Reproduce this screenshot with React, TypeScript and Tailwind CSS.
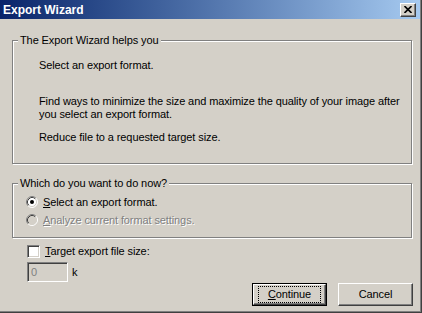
import React from "react";

const font = "font-['Liberation_Sans',Arial,sans-serif]";

function Radio({ checked, disabled }: { checked?: boolean; disabled?: boolean }) {
  return (
    <svg width="12" height="12" viewBox="0 0 12 12" className="shrink-0">
      <circle cx="6" cy="6" r="5" fill={disabled ? "#d4d0c8" : "#ffffff"} />
      <path d="M2.11 9.89 A5.5 5.5 0 0 1 9.89 2.11" fill="none" stroke="#808080" strokeWidth="1" />
      <path d="M9.89 2.11 A5.5 5.5 0 0 1 2.11 9.89" fill="none" stroke="#ffffff" strokeWidth="1" />
      <path d="M2.82 9.18 A4.5 4.5 0 0 1 9.18 2.82" fill="none" stroke="#404040" strokeWidth="1" />
      <path d="M9.18 2.82 A4.5 4.5 0 0 1 2.82 9.18" fill="none" stroke="#d4d0c8" strokeWidth="1" />
      {checked && <circle cx="6" cy="6" r="2" fill="#000000" />}
    </svg>
  );
}

export default function App() {
  return (
    <div
      className={`flex h-[313px] w-[422px] flex-col bg-[#d4d0c8] pr-[2px] pb-[2px] text-[11px] leading-[13px] tracking-[-0.1px] text-black shadow-[inset_-1px_-1px_0_#404040,inset_-2px_-2px_0_#808080] ${font}`}
    >
      {/* title bar */}
      <div className="flex h-[19px] items-center justify-between bg-gradient-to-r from-[#0a246a] to-[#a6caf0] pl-[3px] pr-[4px]">
        <span className="text-[12px] font-bold leading-[14px] tracking-normal text-white">Export Wizard</span>
        <button
          type="button"
          className="flex h-[14px] w-[16px] items-center justify-center border-t border-l border-t-white border-l-white border-r border-b border-r-[#404040] border-b-[#404040] bg-[#d4d0c8] shadow-[inset_-1px_-1px_0_#808080]"
        >
          <svg width="8" height="7" viewBox="0 0 8 7">
            <path d="M0.5 0 L7.5 7 M7.5 0 L0.5 7" stroke="#000" strokeWidth="1.6" />
          </svg>
        </button>
      </div>

      <div className="flex flex-1 flex-col pl-[12px]">
        <fieldset className="mt-[15px] h-[130px] w-[400px] border border-[#808080] shadow-[1px_1px_0_#fff,inset_1px_1px_0_#fff]">
          <legend className="relative ml-[5px] bg-[#d4d0c8] px-[2px] leading-[13px]">The Export Wizard helps you</legend>
          <div className="pl-[26px]">
            <p className="mt-[12px]">Select an export format.</p>
            <p className="mt-[23px]">
              Find ways to minimize the size and maximize the quality of your image after
              <br />
              you select an export format.
            </p>
            <p className="mt-[10px]">Reduce file to a requested target size.</p>
          </div>
        </fieldset>

        <fieldset className="mt-[13px] h-[61px] w-[400px] border border-[#808080] shadow-[1px_1px_0_#fff,inset_1px_1px_0_#fff]">
          <legend className="relative ml-[5px] bg-[#d4d0c8] px-[2px] leading-[13px]">Which do you want to do now?</legend>
          <div className="pl-[13px]">
            <div className="mt-[3px] flex h-[18px] items-center gap-[5px]">
              <Radio checked />
              <span>
                <span className="underline">S</span>elect an export format.
              </span>
            </div>
            <div className="flex h-[18px] items-center gap-[5px]">
              <Radio disabled />
              <span className="text-[#808080] [text-shadow:1px_1px_0_#fff]">
                <span className="underline">A</span>nalyze current format settings.
              </span>
            </div>
          </div>
        </fieldset>

        <div className="ml-[15px] mt-[7px] flex items-center gap-[5px]">
          <div className="h-[13px] w-[13px] border-t border-l border-t-[#808080] border-l-[#808080] border-r border-b border-r-white border-b-white bg-white shadow-[inset_1px_1px_0_#404040,inset_-1px_-1px_0_#d4d0c8]" />
          <span>
            <span className="underline">T</span>arget export file size:
          </span>
        </div>

        <div className="ml-[15px] mt-[4px] flex items-center gap-[4px]">
          <div className="flex h-[20px] w-[41px] items-center border-t border-l border-t-[#808080] border-l-[#808080] border-r border-b border-r-white border-b-white bg-[#d4d0c8] pl-[3px] text-[#808080] shadow-[inset_1px_1px_0_#404040,inset_-1px_-1px_0_#d4d0c8]">
            0
          </div>
          <span>k</span>
        </div>

        <div className="mt-[1px] flex justify-end gap-[11px] pr-[7px]">
          <button
            type="button"
            className="h-[23px] w-[75px] border border-black bg-[#d4d0c8] p-0"
          >
            <div className="flex h-full w-full items-center justify-center border-t border-l border-t-white border-l-white border-r border-b border-r-[#404040] border-b-[#404040] shadow-[inset_-1px_-1px_0_#808080]">
              <span className="flex h-[15px] w-[61px] items-center justify-center outline outline-1 outline-dotted outline-black">
                <span>
                  <span className="underline">C</span>ontinue
                </span>
              </span>
            </div>
          </button>
          <button
            type="button"
            className="flex h-[23px] w-[75px] items-center justify-center border-t border-l border-t-white border-l-white border-r border-b border-r-[#404040] border-b-[#404040] bg-[#d4d0c8] shadow-[inset_-1px_-1px_0_#808080]"
          >
            Cancel
          </button>
        </div>
      </div>
    </div>
  );
}
